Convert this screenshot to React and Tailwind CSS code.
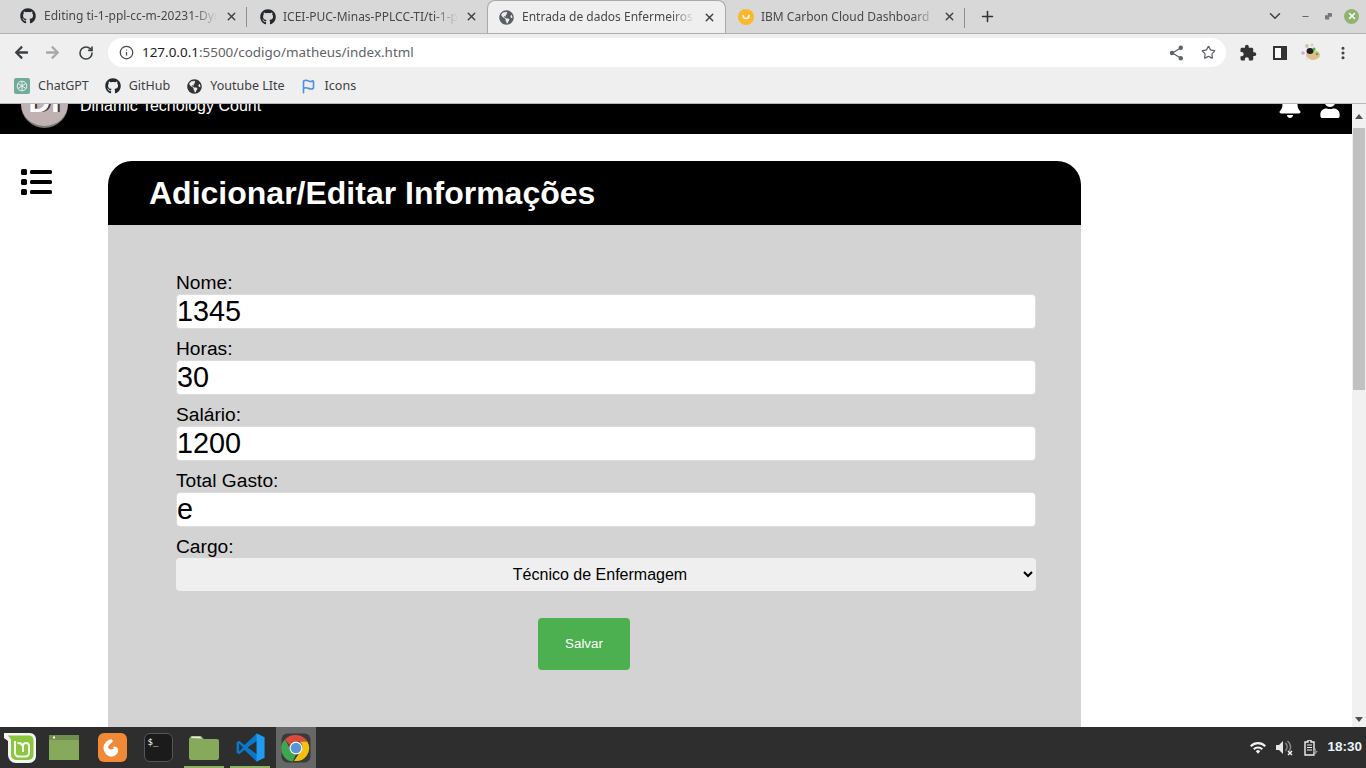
import React from "react";
import { FaGithub, FaGlobeAmericas, FaBell, FaUser, FaArrowLeft, FaArrowRight } from "react-icons/fa";
import { X, Plus, ChevronDown, RotateCw, Info, Star, Minus, EllipsisVertical, Flag } from "lucide-react";

const ui = "font-['Noto_Sans','Open_Sans',sans-serif]";

function Tab({ icon, title, active, sep, gap = "gap-[7px]" }) {
  return (
    <div className={`relative flex items-center w-[239px] shrink-0 h-full pr-[9px] ${active ? "pl-[10px] gap-[8px] bg-[#efefef] rounded-t-[8px] border border-b-0 border-[#a9a9a9] h-[34px]" : `pl-[12px] ${gap}`}`}>
      <span className="w-[16px] h-[16px] flex items-center justify-center shrink-0">{icon}</span>
      <span className="flex-1 overflow-hidden whitespace-nowrap text-[12px] text-[#45494d] [mask-image:linear-gradient(90deg,black_86%,transparent)]">{title}</span>
      <X size={13} strokeWidth={2.5} className="text-[#3c4043] shrink-0" />
      {sep && <span className="absolute right-0 top-[8px] h-[20px] w-px bg-[#8f8f8f]" />}
    </div>
  );
}

function Bookmark({ icon, label }) {
  return (
    <div className="flex items-center gap-[8px] text-[12.500px] text-[#3c4043]">
      <span className="w-[16px] h-[16px] flex items-center justify-center">{icon}</span>
      <span>{label}</span>
    </div>
  );
}

function Field({ label, value }) {
  return (
    <div className="mb-[9px]">
      <label className="block text-[19.2px] leading-[22px] text-black">{label}</label>
      <input
        readOnly
        value={value}
        className="block w-full h-[35px] bg-white rounded-[4px] border border-[#dcdcdc] px-0 text-[28.8px] leading-[33px] text-black outline-none font-['Liberation_Sans',sans-serif]"
      />
    </div>
  );
}

function ChromeIcon({ size = 30 }) {
  return (
    <svg width={size} height={size} viewBox="0 0 30 30">
      <rect x="0.5" y="0.5" width="29" height="29" rx="6" fill="#3a3a3a" />
      <path d="M15 2a13 13 0 0 1 11.3 6.5H15a6.5 6.5 0 0 0-6 4L4 6.5A13 13 0 0 1 15 2z" fill="#dc4a3d" />
      <path d="M4 6.5l5.3 9.4A6.5 6.5 0 0 0 15 21.500l-3.300 7A13 13 0 0 1 4 6.500z" fill="#3fa652" />
      <path d="M26.300 8.500A13 13 0 0 1 13 27.900l6-8.900a6.500 6.500 0 0 0-.5-10.500z" fill="#f4c20d" />
      <circle cx="15" cy="15" r="6.500" fill="#fff" />
      <circle cx="15" cy="15" r="5.300" fill="#5a95d8" />
    </svg>
  );
}

function Task({ children, running, active, w = "w-[40px]" }) {
  return (
    <div className={`relative ${w} h-full flex items-center justify-center shrink-0 ${active ? "bg-[#676767]" : ""}`}>
      {children}
      {running && <span className="absolute left-0 right-0 bottom-0 h-[2px] bg-[#8fb262]" />}
    </div>
  );
}

export default function App() {
  const gh = <FaGithub size={16} className="text-[#24292f]" />;
  return (
    <div className={`w-[1366px] h-[768px] flex flex-col overflow-hidden bg-white font-['Liberation_Sans',sans-serif]`}>
      {/* Tab strip */}
      <div className={`${ui} h-[34px] shrink-0 bg-[#d8d8d8] border-b border-[#b0b0b0] flex items-end relative`}>
        <div className="flex items-center h-[34px] pl-[8px] w-[248px] shrink-0">
          <Tab icon={gh} title="Editing ti-1-ppl-cc-m-20231-Dynamic" sep gap="gap-[8px]" />
        </div>
        <Tab icon={gh} title="ICEI-PUC-Minas-PPLCC-TI/ti-1-ppl-cc" />
        <Tab icon={<FaGlobeAmericas size={15} className="text-[#5a5e63]" />} title="Entrada de dados Enfermeiros" active />
        <Tab
          icon={
            <svg width="16" height="16" viewBox="0 0 16 16">
              <circle cx="8" cy="8" r="8" fill="#fbb829" />
              <path d="M5 6.500a3 3 0 0 0 6 0" fill="none" stroke="#fff" strokeWidth="1.600" strokeLinecap="round" />
            </svg>
          }
          title="IBM Carbon Cloud Dashboard"
          sep
        />
        <div className="w-[45px] flex items-center justify-center h-[34px]">
          <Plus size={17} strokeWidth={2.2} className="text-[#333]" />
        </div>
        <div className="flex-1 flex items-center justify-end h-[34px] pr-[7px]">
          <ChevronDown size={18} strokeWidth={2} className="text-[#3c4043] mr-[17px]" />
          <Minus size={9} strokeWidth={3} className="text-[#666] mr-[15px]" />
          <span className="w-[7px] h-[7px] bg-[#777] rounded-[1px] mr-[12px] [clip-path:polygon(100%_0,100%_60%,60%_60%,60%_100%,0_100%,0_40%,40%_40%,40%_0)]" />
          <span className="w-[15px] h-[15px] rounded-full bg-[#8eb56f] flex items-center justify-center">
            <X size={10} strokeWidth={3.5} className="text-white" />
          </span>
        </div>
      </div>

      {/* Address bar */}
      <div className={`${ui} h-[35px] shrink-0 bg-[#efefef] flex items-center pt-[2px]`}>
        <div className="w-[108px] flex items-center pl-[14px] shrink-0">
          <FaArrowLeft size={15} className="text-[#3c4043] mr-[16px]" />
          <FaArrowRight size={15} className="text-[#a8a8a8] mr-[18px]" />
          <RotateCw size={16} strokeWidth={2.4} className="text-[#3c4043]" />
        </div>
        <div className="w-[1118px] h-[29px] bg-white rounded-full flex items-center pl-[11px] pr-[10px]">
          <Info size={15} className="text-[#45494d] mr-[8px]" />
          <span className="flex-1 text-[13.450px] text-[#5f6368] whitespace-nowrap"><span className="text-[#202124]">127.0.0.1</span>:5500/codigo/matheus/index.html</span>
          <svg width="15" height="16" viewBox="0 0 15 16" className="mr-[17px]">
            <path d="M11.500 3L3.500 8l8 5" fill="none" stroke="#5f6368" strokeWidth="1.300" />
            <circle cx="11.800" cy="2.800" r="2.200" fill="#5f6368" />
            <circle cx="3" cy="8" r="2.200" fill="#5f6368" />
            <circle cx="11.800" cy="13.200" r="2.200" fill="#5f6368" />
          </svg>
          <Star size={15} strokeWidth={2} className="text-[#5f6368]" />
        </div>
        <div className="flex-1 flex items-center pl-[13px]">
          <svg width="18" height="18" viewBox="0 0 24 24" className="mr-[16px]">
            <path fill="#333" d="M20.500 11H19V7c0-1.100-.9-2-2-2h-4V3.500C13 2.120 11.880 1 10.500 1S8 2.120 8 3.500V5H4c-1.100 0-1.990.9-1.990 2v3.800H3.500c1.490 0 2.700 1.210 2.700 2.700s-1.210 2.700-2.700 2.700H2V20c0 1.100.9 2 2 2h3.800v-1.500c0-1.490 1.210-2.700 2.700-2.700 1.490 0 2.700 1.210 2.700 2.700V22H17c1.100 0 2-.9 2-2v-4h1.500c1.380 0 2.500-1.120 2.500-2.500S21.880 11 20.500 11z" />
          </svg>
          <span className="w-[14px] h-[14px] border-[2px] border-[#333] bg-[linear-gradient(90deg,#fafafa_60%,#333_60%)] mr-[13px]" />
          <svg width="21" height="21" viewBox="0 0 21 21">
            <ellipse cx="13" cy="13" rx="7" ry="5" fill="#e2bd8c" />
            <ellipse cx="10" cy="9" rx="3.500" ry="3" fill="#1f1f1f" />
            <circle cx="14" cy="7" r="1.500" fill="#2fc52f" />
            <circle cx="17" cy="12" r="1.300" fill="#2fc52f" />
            <circle cx="3" cy="11" r="1.800" fill="#d7a5dc" />
            <circle cx="7" cy="4" r="2" fill="#cfc6b6" />
            <circle cx="12" cy="3" r="1.500" fill="#d8cfc0" />
            <circle cx="7" cy="17" r="1.700" fill="#dfe8e8" />
          </svg>
          <EllipsisVertical size={16} strokeWidth={2.6} className="text-[#3c4043] ml-[14px]" />
        </div>
      </div>

      {/* Bookmarks */}
      <div className={`${ui} h-[35px] shrink-0 bg-[#efefef] border-b border-[#b9b9b9] flex items-center pl-[14px] gap-[16px]`}>
        <Bookmark
          label="ChatGPT"
          icon={
            <span className="w-[16px] h-[16px] rounded-[2px] bg-[#74aa9c] flex items-center justify-center">
              <svg width="12" height="12" viewBox="0 0 12 12" fill="none" stroke="#e6f2ee" strokeWidth="1">
                <circle cx="6" cy="6" r="4.800" />
                <path d="M6 1.500v9M2 3.500l8 5M10 3.500l-8 5" />
              </svg>
            </span>
          }
        />
        <Bookmark label="GitHub" icon={<FaGithub size={16} className="text-[#24292f]" />} />
        <Bookmark label="Youtube LIte" icon={<FaGlobeAmericas size={15} className="text-[#333]" />} />
        <Bookmark label="Icons" icon={<Flag size={15} className="text-[#4f8fe6]" strokeWidth={2.6} />} />
      </div>

      {/* Page */}
      <div className="flex-1 min-h-0 flex">
        <div className="flex-1 min-w-0 flex flex-col overflow-hidden">
          <header className="h-[30px] shrink-0 bg-black flex items-start overflow-hidden text-white">
            <div className="ml-[21px] -mt-[24px] w-[47px] h-[48px] rounded-full bg-[#c0b1b2] border-b-[2px] border-[#777] flex items-center justify-center shrink-0">
              <span className="text-[30px] leading-none font-bold text-white -mt-[2px] tracking-[1px] [text-shadow:2px_0_0_#333]">DI</span>
            </div>
            <span className="ml-[12px] -mt-[7px] text-[16px] leading-[18px]">Dinamic Techology Count</span>
            <div className="ml-auto mr-[11px] flex gap-[17px] -mt-[10px]">
              <FaBell size={24} />
              <FaUser size={22} className="mt-[2px]" />
            </div>
          </header>
          <div className="flex flex-1 min-h-0 overflow-hidden">
            <div className="w-[108px] shrink-0 pl-[21px] pt-[35px]">
              <svg width="31" height="26" viewBox="0 0 31 26">
                <rect x="0" y="0" width="6" height="6" rx="1.500" fill="#000" />
                <rect x="0" y="10" width="6" height="6" rx="1.500" fill="#000" />
                <rect x="0" y="20" width="6" height="6" rx="1.500" fill="#000" />
                <rect x="9" y="1" width="22" height="4" rx="1.500" fill="#000" />
                <rect x="9" y="11" width="22" height="4" rx="1.500" fill="#000" />
                <rect x="9" y="21" width="22" height="4" rx="1.500" fill="#000" />
              </svg>
            </div>
            <main className="w-[973px] mt-[27px] shrink-0">
              <div className="h-[64px] bg-black rounded-t-[24px] pl-[41px] flex items-center">
                <h1 className="text-[32px] font-bold text-white leading-none">Adicionar/Editar Informações</h1>
              </div>
              <form className="bg-[#d3d3d3] h-[600px] px-[68px] pt-[47px]">
                <div className="w-[860px]">
                  <Field label="Nome:" value="1345" />
                  <Field label="Horas:" value="30" />
                  <Field label="Salário:" value="1200" />
                  <Field label="Total Gasto:" value="e" />
                  <label className="block text-[19.2px] leading-[22px] text-black">Cargo:</label>
                  <select defaultValue="t" className="block w-full h-[33px] rounded-[4px] bg-[#efefef] text-[16px] text-black text-center outline-none appearance-auto font-['Liberation_Sans',sans-serif]">
                    <option value="t">Técnico de Enfermagem</option>
                  </select>
                </div>
                <button type="button" className="block mt-[27px] ml-[362px] w-[92px] h-[52px] bg-[#4caf50] rounded-[4px] text-[13.330px] text-white font-['Liberation_Sans',sans-serif]">Salvar</button>
              </form>
            </main>
          </div>
        </div>
        {/* Scrollbar */}
        <div className="w-[14px] shrink-0 bg-[#f1f1f1] flex flex-col items-center">
          <div className="h-[24px] flex items-center justify-center"><span className="w-0 h-0 border-x-[4px] border-x-transparent border-b-[5px] border-b-[#505050]" /></div>
          <div className="w-[12px] h-[262px] bg-[#c1c1c1]" />
          <div className="flex-1" />
          <div className="h-[16px] flex items-center justify-center"><span className="w-0 h-0 border-x-[4px] border-x-transparent border-t-[5px] border-t-[#505050]" /></div>
        </div>
      </div>

      {/* Taskbar */}
      <div className={`${ui} h-[41px] shrink-0 bg-[#2e2e2e] flex items-stretch`}>
        <div className="w-[44px] flex items-center pl-[4px] shrink-0">
          <svg width="32" height="30" viewBox="0 0 32 30">
            <path d="M0 0h26a6 6 0 0 1 6 6v17a7 7 0 0 1-7 7H12a8 8 0 0 1-8-8V8L0 5z" fill="#f4f4f4" />
            <path d="M4 2.500h21a4.500 4.500 0 0 1 4.500 4.500v15a5 5 0 0 1-5 5H12a5 5 0 0 1-5-5V6.500z" fill="#8cc63f" />
            <path d="M11 8v12a3.500 3.500 0 0 0 3.500 3.500h7a3.500 3.500 0 0 0 3.500-3.500v-7a3 3 0 0 0-3-3 3 3 0 0 0-3 3v6M18 13a3 3 0 0 0-3-3 3 3 0 0 0-1.500.5" fill="none" stroke="#f4f4f4" strokeWidth="2" />
          </svg>
        </div>
        <div className="flex-1 flex items-stretch">
          <Task>
            <svg width="30" height="25" viewBox="0 0 30 25">
              <rect width="30" height="25" fill="#86a95b" />
              <rect width="30" height="5" fill="#6f8f4b" />
              <rect x="4" y="1.500" width="2" height="2" fill="#fff" />
            </svg>
          </Task>
          <div className="w-[8px] shrink-0" />
          <Task>
            <svg width="29" height="29" viewBox="0 0 29 29">
              <rect width="29" height="29" rx="6" fill="#f08a36" />
              <circle cx="14.500" cy="15" r="9" fill="#fff" />
              <path d="M13 5c6-2 13 2 12 10-1 6-6 10-12 9 5-1 8-4 7-8-1-2-3-3-5-2 1 1 1 2 0 2-2 1-5 0-5-2 1-3 4-4 5-6-1-1-2-2-2-3z" fill="#f08a36" />
            </svg>
          </Task>
          <div className="w-[6px] shrink-0" />
          <Task>
            <div className="w-[29px] h-[29px] rounded-[6px] bg-[#1b1b1b] border border-[#555] text-[9px] leading-[10px] text-white pl-[3px] pt-[3px] font-['DejaVu_Sans_Mono',monospace]">$_</div>
          </Task>
          <div className="w-[6px] shrink-0" />
          <Task running>
            <svg width="30" height="25" viewBox="0 0 30 25">
              <path d="M0 4l2-3h10l3 3h13a2 2 0 0 1 2 2v17a2 2 0 0 1-2 2H2a2 2 0 0 1-2-2z" fill="#86a95b" />
              <path d="M2 3l1-1.500h8l2 2z" fill="#e8e8e8" />
            </svg>
          </Task>
          <div className="w-[6px] shrink-0" />
          <Task running>
            <svg width="29" height="29" viewBox="0 0 100 100">
              <path d="M71 2l27 13v70l-27 13-42-39-18 14-9-5V32l9-5 18 14z" fill="#0a78c8" />
              <path d="M72 27L40 50l32 23z" fill="#2e2e2e" />
              <path d="M71 2l27 13v70l-27 13z" fill="#1f9cf0" />
              <path d="M11 36l13 14-13 14z" fill="#2e2e2e" />
            </svg>
          </Task>
          <div className="w-[6px] shrink-0" />
          <Task active><ChromeIcon /></Task>
        </div>
        <div className="flex items-center pr-[4px] text-white">
          <svg width="16" height="13" viewBox="0 0 16 13" className="mr-[10px]">
            <path d="M0 4.500a11 11 0 0 1 16 0l-1.500 1.500a9 9 0 0 0-13 0zM3 7.500a7 7 0 0 1 10 0l-1.500 1.500a5 5 0 0 0-7 0zM5.800 10.300a3 3 0 0 1 4.400 0L8 12.800z" fill="#f2f2f2" />
          </svg>
          <svg width="18" height="16" viewBox="0 0 18 16" className="mr-[10px]">
            <path d="M0 5h3l4-4v13l-4-4H0z" fill="#e6e6e6" />
            <path d="M9.500 3a6 6 0 0 1 0 8M11.500 1a8.500 8.500 0 0 1 2 10" fill="none" stroke="#8a8a8a" strokeWidth="1.500" />
            <path d="M12 11l4 4M16 11l-4 4" stroke="#f2f2f2" strokeWidth="1.500" />
          </svg>
          <svg width="14" height="16" viewBox="0 0 14 16" className="mr-[9px]">
            <path d="M4 0h3v2h3v13H1V2h3z" fill="none" stroke="#efefef" strokeWidth="1.400" />
            <path d="M3 5h5M3 7.500h5M3 10h5" stroke="#efefef" strokeWidth="1.200" />
            <path d="M12 8l-3 4h2l-1 4 4-5h-2z" fill="#888" />
          </svg>
          <span className="text-[13.500px] font-bold text-[#eaf2fa] font-['Liberation_Sans',sans-serif]">18:30</span>
        </div>
      </div>
    </div>
  );
}
